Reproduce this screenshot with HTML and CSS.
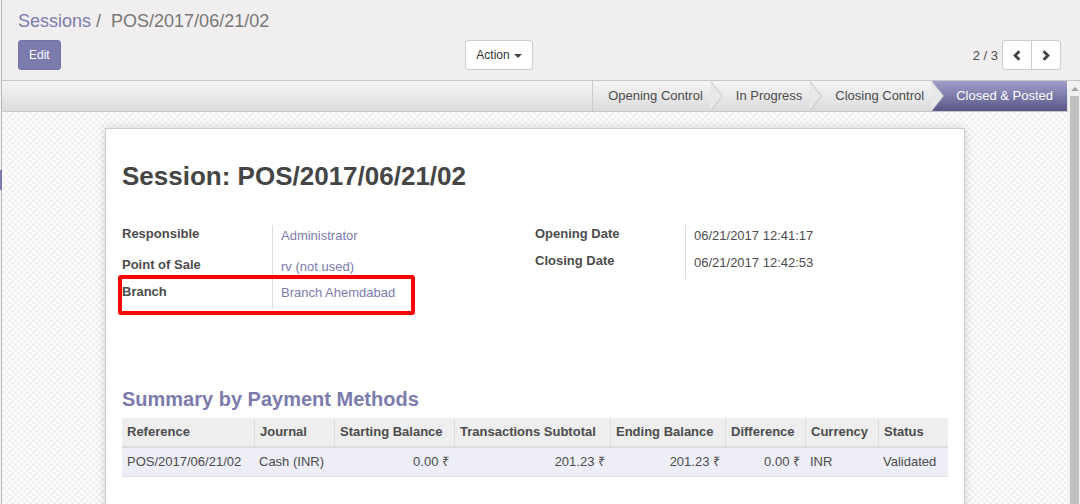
FILE: index.html
```html
<!DOCTYPE html>
<html>
<head>
<meta charset="utf-8">
<title>Session POS/2017/06/21/02</title>
<link rel="stylesheet" href="styles.css">
</head>
<body>
<div class="app">
  <div class="menu-edge"><div class="menu-active"></div></div>
  <div class="action">
    <div class="cp">
      <ol class="breadcrumb">
        <li><a class="bc-link">Sessions</a></li>
        <li class="bc-active">POS/2017/06/21/02</li>
      </ol>
      <div class="cp-row">
        <div class="cp-left">
          <button class="btn btn-primary">Edit</button>
          <button class="btn btn-default">Action <span class="caret"></span></button>
        </div>
        <div class="cp-right">
          <span class="pager-value">2 / 3</span>
          <div class="btn-group">
            <button class="btn btn-default btn-pager first"><svg width="8" height="11" viewBox="0 0 8 11"><polyline points="6.4,1.3 2.1,5.5 6.4,9.7" fill="none" stroke="#444" stroke-width="2.8"/></svg></button>
            <button class="btn btn-default btn-pager last"><svg width="8" height="11" viewBox="0 0 8 11"><polyline points="1.6,1.3 5.9,5.5 1.6,9.7" fill="none" stroke="#444" stroke-width="2.8"/></svg></button>
          </div>
        </div>
      </div>
    </div>
    <div class="content">
      <div class="form">
        <div class="statusbar">
          <span class="step first">Opening Control</span>
          <span class="step">In Progress</span>
          <span class="step">Closing Control</span>
          <span class="step active">Closed &amp; Posted</span>
        </div>
        <div class="sheet-bg">
          <div class="sheet">
            <h1 class="title">Session: POS/2017/06/21/02</h1>
            <div class="groups">
              <div class="group group-left">
                <div class="lbl">Responsible</div><div class="val"><a class="link">Administrator</a></div>
                <div class="lbl">Point of Sale</div><div class="val"><a class="link">rv (not used)</a></div>
                <div class="lbl lbl-branch">Branch</div><div class="val"><a class="link">Branch Ahemdabad</a></div>
                <div class="highlight"></div>
              </div>
              <div class="group group-right">
                <div class="lbl">Opening Date</div><div class="val">06/21/2017 12:41:17</div>
                <div class="lbl">Closing Date</div><div class="val">06/21/2017 12:42:53</div>
              </div>
            </div>
            <h2 class="summary">Summary by Payment Methods</h2>
            <table class="list">
              <colgroup>
                <col style="width:132px"><col style="width:80px"><col style="width:120px"><col style="width:156px"><col style="width:115px"><col style="width:80px"><col style="width:73px"><col style="width:70px">
              </colgroup>
              <thead>
                <tr>
                  <th>Reference</th><th>Journal</th><th>Starting Balance</th><th>Transactions Subtotal</th><th>Ending Balance</th><th>Difference</th><th>Currency</th><th>Status</th>
                </tr>
              </thead>
              <tbody>
                <tr>
                  <td>POS/2017/06/21/02</td><td>Cash (INR)</td><td class="num">0.00 ₹</td><td class="num">201.23 ₹</td><td class="num">201.23 ₹</td><td class="num">0.00 ₹</td><td>INR</td><td>Validated</td>
                </tr>
              </tbody>
            </table>
          </div>
        </div>
      </div>
      <div class="scrollbar"><div class="sb-up"></div><div class="sb-thumb"></div></div>
    </div>
  </div>
</div>
</body>
</html>
```
FILE: styles.css
```css
* { box-sizing: border-box; }
html, body { margin: 0; padding: 0; }
body {
  width: 1080px;
  height: 504px;
  overflow: hidden;
  font-family: "Liberation Sans", Arial, Helvetica, sans-serif;
  font-size: 13px;
  color: #4c4c4c;
  background: #fff;
}
.app { display: flex; height: 504px; overflow: hidden; }
.menu-edge {
  width: 2px;
  flex: none;
  background: linear-gradient(to right, #f4f4f4 1px, #b8b8b8 1px);
}
.menu-active { width: 2px; height: 20px; margin-top: 170px; background: #7c7bad; }
.action { flex: 1; min-width: 0; display: flex; flex-direction: column; overflow: hidden; }

/* control panel */
.cp {
  background: #f0eeee;
  border-bottom: 1px solid #c6c6c6;
  padding: 8px 19px 10px 16px;
  height: 81px;
  flex: none;
}
.breadcrumb {
  margin: 0; padding: 0; list-style: none;
  display: flex;
  font-size: 18px;
  line-height: 26px;
  color: #777;
}
.breadcrumb li + li::before { content: "/\00a0"; padding: 0 5px; color: #777; }
.bc-link { color: #7c7bad; }
.cp-row { display: flex; margin-top: 6px; height: 30px; }
.cp-left { flex: 0 0 515px; display: flex; justify-content: space-between; }
.cp-right { flex: 1; display: flex; justify-content: flex-end; align-items: center; }
.btn {
  font-family: inherit;
  font-size: 12px;
  line-height: 18px;
  height: 30px;
  padding: 5px 10px;
  border: 1px solid transparent;
  border-radius: 3px;
  margin: 0;
}
.btn-primary { background: #7c7bad; border-color: #7473a6; color: #fff; }
.btn-default { background: #fff; border-color: #ccc; color: #333; }
.cp-left .btn-default { padding-left: 10px; padding-right: 10px; margin-left: 1px; }
.caret {
  display: inline-block;
  width: 0; height: 0;
  margin-left: 1px;
  vertical-align: middle;
  border-top: 4px solid #444;
  border-left: 4px solid transparent;
  border-right: 4px solid transparent;
}
.pager-value { margin-right: 4px; color: #4c4c4c; }
.btn-group { display: flex; }
.btn-pager { width: 30px; padding: 5px 0; display: flex; align-items: center; justify-content: center; }
.btn-pager.first { border-radius: 3px 0 0 3px; }
.btn-pager.last { border-radius: 0 3px 3px 0; margin-left: -1px; }

/* content */
.content { flex: 1; display: flex; min-height: 0; overflow: hidden; }
.form { flex: 1; min-width: 0; display: flex; flex-direction: column; overflow: hidden; }
.statusbar {
  height: 31px;
  flex: none;
  display: flex;
  justify-content: flex-end;
  padding-right: 1px;
  border-bottom: 1px solid #c8c8c8;
  background: linear-gradient(#f5f5f5, #dcdcdc);
}
.step {
  position: relative;
  height: 30px;
  line-height: 30px;
  padding: 0 8px 0 25px;
  white-space: nowrap;
  color: #4c4c4c;
}
.step.first { padding-left: 15px; border-left: 1px solid #cdcdcd; }
.step::before, .step::after {
  content: "";
  position: absolute;
  top: 0;
  width: 0; height: 0;
  border-top: 15px solid transparent;
  border-bottom: 15px solid transparent;
  z-index: 2;
}
.step::before { left: 100%; border-left: 12px solid #c4c4c4; }
.step::after { left: calc(100% - 1px); border-left: 12px solid #e8e8e8; }
.step.active {
  padding: 0 14px 0 24px;
  color: #fff;
  background: linear-gradient(#a09fcb, #585786);
}
.step.active::before, .step.active::after { display: none; }

.sheet-bg {
  flex: 1;
  min-height: 0;
  overflow: hidden;
  padding-top: 16px;
  background-color: #fdfdfd;
  background-image: repeating-conic-gradient(#f1f1f1 0% 25%, #fdfdfd 0% 50%);
  background-size: 6px 6px;
}
.sheet {
  width: 860px;
  height: 420px;
  margin: 0 auto;
  background: #fff;
  border: 1px solid #cbcbd5;
  box-shadow: 0 0 9px rgba(0, 0, 0, 0.16);
  padding: 16px;
}
.title {
  margin: 16px 0 0;
  font-size: 26px;
  line-height: 30px;
  font-weight: bold;
  color: #454545;
}
.groups { display: grid; grid-template-columns: 1fr 1fr; margin-top: 34px; align-items: start; }
.group { display: grid; grid-template-columns: 150px 1fr; }
.group-left { position: relative; grid-template-rows: 31px 26px 27px; }
.group-right { grid-template-rows: 27px 27px; }
.lbl { font-weight: bold; line-height: 18px; color: #4c4c4c; }
.lbl-branch { padding-top: 1px; }
.val { border-left: 1px solid #ddd; padding: 2px 0 0 8px; line-height: 18px; }
.link { color: #7c7bad; }
.highlight {
  position: absolute;
  left: -4px;
  top: 50px;
  width: 297px;
  height: 40px;
  border: 4px solid #f00;
  border-radius: 3px;
}
.summary {
  margin: 78px 0 7px;
  font-size: 20px;
  line-height: 24px;
  font-weight: bold;
  color: #7c7bad;
}
.list {
  width: 826px;
  table-layout: fixed;
  border-collapse: separate;
  border-spacing: 0;
}
.list th {
  background: #eee;
  border-bottom: 2px solid #ddd;
  border-left: 1px solid #dcdcdc;
  text-align: left;
  font-weight: bold;
  padding: 5px;
  line-height: 18px;
  white-space: nowrap;
  color: #4c4c4c;
}
.list th:first-child { border-left: none; }
.list td {
  background: #eeeef6;
  border-bottom: 1px solid #ddd;
  padding: 5px;
  line-height: 18px;
  white-space: nowrap;
}
.list td.num { text-align: right; }

.scrollbar {
  width: 12px;
  flex: none;
  background: #f1f1f1;
  display: flex;
  flex-direction: column;
  align-items: center;
  padding: 6px 0 0 1px;
}
.sb-up {
  width: 0; height: 0;
  border-bottom: 4px solid #a3a3a3;
  border-left: 4px solid transparent;
  border-right: 4px solid transparent;
}
.sb-thumb { width: 9px; flex: 1; margin-top: 5px; background: #c1c1c1; }
```
